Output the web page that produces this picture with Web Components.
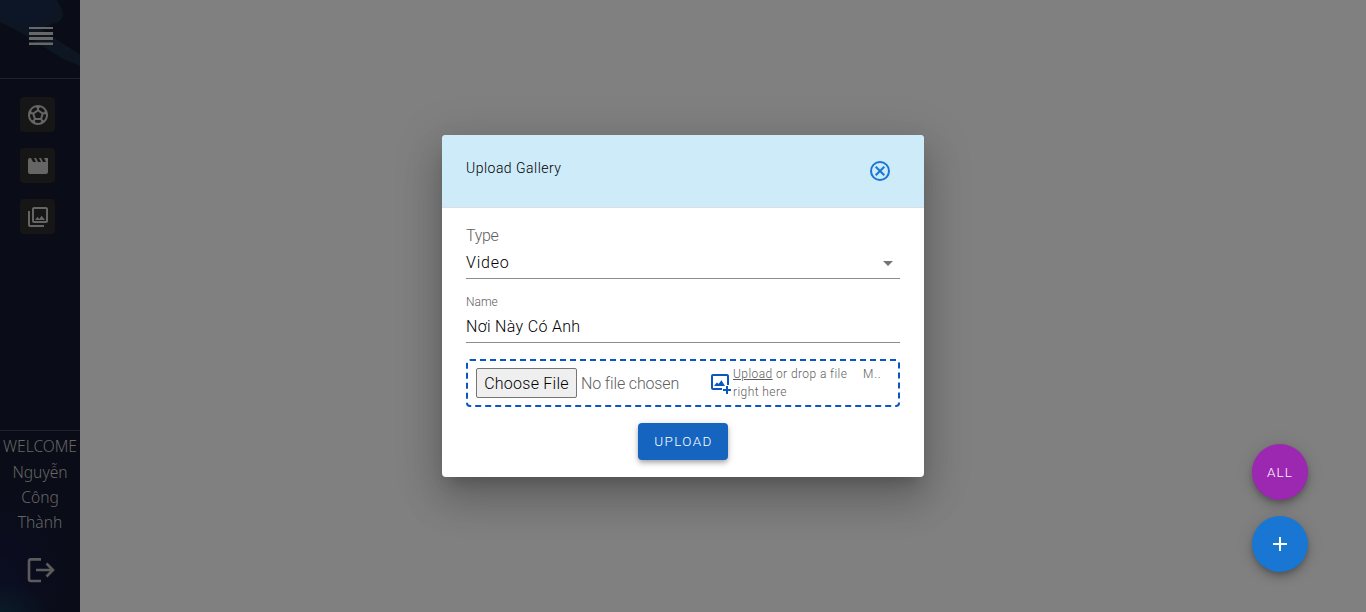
<!DOCTYPE html>
<html lang="vi">
<head>
<meta charset="utf-8">
<title>Gallery</title>
<style>
html,body{margin:0;height:100%;overflow:hidden;background:#808080}
body{font-family:Roboto,"Liberation Sans",sans-serif;font-weight:300;color:#111}
</style>
</head>
<body>
<gallery-app></gallery-app>
<script>
const define=(name,html)=>customElements.define(name,class extends HTMLElement{
  constructor(){super();this.attachShadow({mode:'open'}).innerHTML=html;}
});

define('nav-tile',`<style>
:host{display:flex;width:35px;height:35px;border-radius:4px;background:#161616;align-items:center;justify-content:center;color:#656565}
</style><slot></slot>`);

define('side-bar',`<style>
:host{display:flex;flex-direction:column;width:80px;height:612px;box-sizing:border-box;color:#696969;
background:radial-gradient(ellipse 50px 32px at 0 100%,#0a1b28 0,#0a162500 100%),radial-gradient(ellipse 80px 100px at 0 580px,#0b0d22 0,#0b0c1800 100%),#0a0c17;position:relative;overflow:hidden}
.art{position:absolute;inset:0}
.top{position:relative;height:78px;border-bottom:1px solid #20222c;display:flex;align-items:flex-start;justify-content:center;padding:26px 0 0 2px;box-sizing:border-box;height:79px}
nav{position:relative;flex:1;display:flex;flex-direction:column;gap:16px;padding:18px 0 0 20px}
.user{position:relative;height:182px;box-sizing:border-box;border-top:1px solid #20222c;text-align:center;font:300 15.6px/25px "Noto Sans","Open Sans",sans-serif;color:#666;padding-top:3px;display:flex;flex-direction:column;align-items:center}
.user span{white-space:nowrap;height:25px}
.user span:first-child{height:26px}
.user svg{margin:22px 0 0 2px}
</style>
<svg class="art" width="80" height="612"><defs><filter id="b"><feGaussianBlur stdDeviation="1.500"/></filter></defs><g filter="url(#b)"><path d="M-5 -5H54L62 9Q66 22 51 24L40 29 85 58V68L62 58 26 35 -5 19Z" fill="#0b1622"/><path d="M-5 -5H50L57 12 30 28 -5 16Z" fill="#0b1825"/></g></svg>
<div class="top"><svg width="24" height="20" fill="#686868"><path d="M0 1h24v2H0zM0 6h24v3H0zM0 11h24v3H0zM0 16.500h24v2.500H0z"/></svg></div>
<nav>
<nav-tile><svg width="24" height="24" viewBox="0 0 24 24" fill="currentColor"><path d="M12 2C6.480 2 2 6.480 2 12s4.480 10 10 10 10-4.480 10-10S17.520 2 12 2zm1 3.300 1.350-.95c1.820.56 3.370 1.760 4.380 3.340l-.39 1.340-1.350.46L13 6.700zm-3.350-.95L11 5.300v1.400L7.010 9.490l-1.350-.46-.39-1.340c1.010-1.570 2.560-2.770 4.380-3.340zM7.080 17.110l-1.140.1C4.730 15.810 4 13.990 4 12c0-.12.01-.23.02-.35l1-.73 1.380.48 1.460 4.340zm7.420 2.480c-.79.26-1.630.41-2.500.41s-1.710-.15-2.500-.41l-.69-1.490.64-1.100h5.110l.64 1.110zM14.270 15H9.730l-1.350-4.020L12 8.440l3.630 2.540zm3.790 2.210-1.140-.1-.79-1.370 1.460-4.340 1.390-.47 1 .73c.01.11.02.22.02.34 0 1.990-.73 3.810-1.940 5.210z"/></svg></nav-tile>
<nav-tile><svg width="24" height="24" viewBox="0 0 24 24" fill="currentColor"><path d="m18 4 2 4h-3l-2-4h-2l2 4h-3l-2-4H8l2 4H7L5 4H4c-1.100 0-1.990.9-1.990 2L2 18c0 1.100.9 2 2 2h16c1.100 0 2-.9 2-2V4z"/></svg></nav-tile>
<nav-tile><svg width="24" height="24" viewBox="0 0 24 24" fill="currentColor"><path d="M20 4v12H8V4zm0-2H8c-1.100 0-2 .9-2 2v12c0 1.100.9 2 2 2h12c1.100 0 2-.9 2-2V4c0-1.100-.9-2-2-2zm-8.500 9.670 1.690 2.260 2.480-3.100L19 15H9zM2 6v14c0 1.100.9 2 2 2h14v-2H4V6z"/></svg></nav-tile>
</nav>
<div class="user"><span>WELCOME</span><span>Nguyễn</span><span>Công</span><span>Thành</span>
<svg width="28" height="26" fill="none" stroke="#5c5c5c" stroke-width="2.600"><path d="M14 2.400H4Q2 2.400 2 4.400V22Q2 24 4 24H14M9 13H26M19.500 6.500 26 13 19.500 19.500"/></svg></div>`);

define('modal-header',`<style>
:host{display:flex;height:73px;box-sizing:border-box;background:#cdebf9;border-bottom:1px solid #dcdfe1;padding:24px 32px 0 24px;justify-content:space-between;border-radius:4px 4px 0 0}
span{font-size:14px;line-height:18px;letter-spacing:.48px;color:#000}
svg{display:block}
</style><span><slot></slot></span><svg width="24" height="24" viewBox="0 0 24 24" fill="none" stroke="#1976d2" stroke-width="2"><circle cx="12" cy="12" r="9"/><path d="m7.700 7.700 8.600 8.600m0-8.600-8.600 8.600"/></svg>`);

define('form-field',`<style>
:host{display:block;border-bottom:1px solid #8d8d8d;box-sizing:border-box}
</style><slot></slot>`);

define('drop-zone',`<style>
:host{display:flex;height:48px;box-sizing:border-box;border:2px dashed #0b57c2;border-radius:4px;padding:7px 8px;color:#606060;align-items:flex-start}
.b{height:30px;width:101px;box-sizing:border-box;border:1px solid #767676;border-radius:2px;background:#efefef;color:#000;font-size:16px;line-height:29px;letter-spacing:.25px;text-align:center;white-space:nowrap}
.n{margin-left:4px;width:128px;line-height:31px;font-size:16px;letter-spacing:-.14px;white-space:nowrap}
svg{margin-top:3px;width:24px;height:24px;flex:none}
.t{font-size:12px;line-height:18px;letter-spacing:.42px;margin:-3px 0 0 0;width:130px;white-space:nowrap}
.m{font-size:12px;line-height:18px;letter-spacing:.8px;margin-top:-3px}
</style><span class="b">Choose File</span><span class="n">No file chosen</span>
<svg viewBox="0 0 24 24" fill="#0b57c2"><path d="M4 3h14c1.100 0 2 .9 2 2v9h-2V5H4v12h9v2H4c-1.100 0-2-.9-2-2V5c0-1.100.9-2 2-2zM5 15l2.750-3.530 1.960 1.300 2.750-3.500L16 15zM17 15h2v3h3v2h-3v3h-2v-3h-3v-2h3z"/></svg>
<span class="t"><u>Upload</u> or drop a file<br>right here</span><span class="m">M..</span>`);

define('upload-dialog',`<style>
:host{display:block;width:482px;height:342px;box-sizing:border-box;background:#fff;border-radius:4px;box-shadow:0 11px 15px -7px #0003,0 24px 38px 3px #00000024,0 9px 46px 8px #0000001f}
.c{padding:0 24px;display:flex;flex-direction:column}
.type{height:71px;padding-top:18px}
.name{height:64px;padding-top:14px}
form-field div{white-space:nowrap}
.l{font-size:16px;line-height:20px;letter-spacing:-.3px;color:#606060}
.v{font-size:16px;line-height:24px;color:#000}
.row{display:flex;justify-content:space-between;margin-top:5px;letter-spacing:.8px}
.s{font-size:12px;line-height:18px;color:#606060}
.name .v{margin-top:4px;letter-spacing:.32px}
drop-zone{margin-top:16px}
button{align-self:center;margin-top:16px;width:90px;height:37px;border:0;border-radius:4px;background:#1565c0;color:#fff;font:300 13.5px/24px Roboto,sans-serif;letter-spacing:1.400px;padding:0 0 2px 1px;box-shadow:0 2px 4px -1px #0003,0 4px 5px #00000024,0 1px 10px #0000001f}
</style><modal-header>Upload Gallery</modal-header><div class="c">
<form-field class="type"><div class="l">Type</div><div class="v row"><span>Video</span><svg width="24" height="24" fill="#757575"><path d="m7 10 5 5 5-5z"/></svg></div></form-field>
<form-field class="name"><div class="s">Name</div><div class="v">Nơi Này Có Anh</div></form-field>
<drop-zone></drop-zone><button>UPLOAD</button></div>`);

define('fab-button',`<style>
:host{display:flex;width:56px;height:56px;border-radius:50%;background:var(--c);align-items:center;justify-content:center;color:#fff;font-size:13.5px;letter-spacing:1.100px;box-shadow:0 3px 5px -1px #0003,0 6px 10px #00000024,0 1px 18px #0000001f}
</style><slot></slot>`);

define('gallery-app',`<style>
:host{display:flex;width:1366px;height:612px;position:relative}
main{flex:1}
.overlay{position:absolute;inset:0;display:grid;place-items:center}
.fabs{position:absolute;right:58px;bottom:40px;display:flex;flex-direction:column;gap:16px}
</style><side-bar></side-bar><main></main>
<div class="fabs"><fab-button style="--c:#9c27b0">ALL</fab-button><fab-button style="--c:#1976d2"><svg width="24" height="24" fill="#fff"><path d="M11 5h2v6h6v2h-6v6h-2v-6H5v-2h6z"/></svg></fab-button></div>
<div class="overlay"><upload-dialog></upload-dialog></div>`);
</script>
</body>
</html>
